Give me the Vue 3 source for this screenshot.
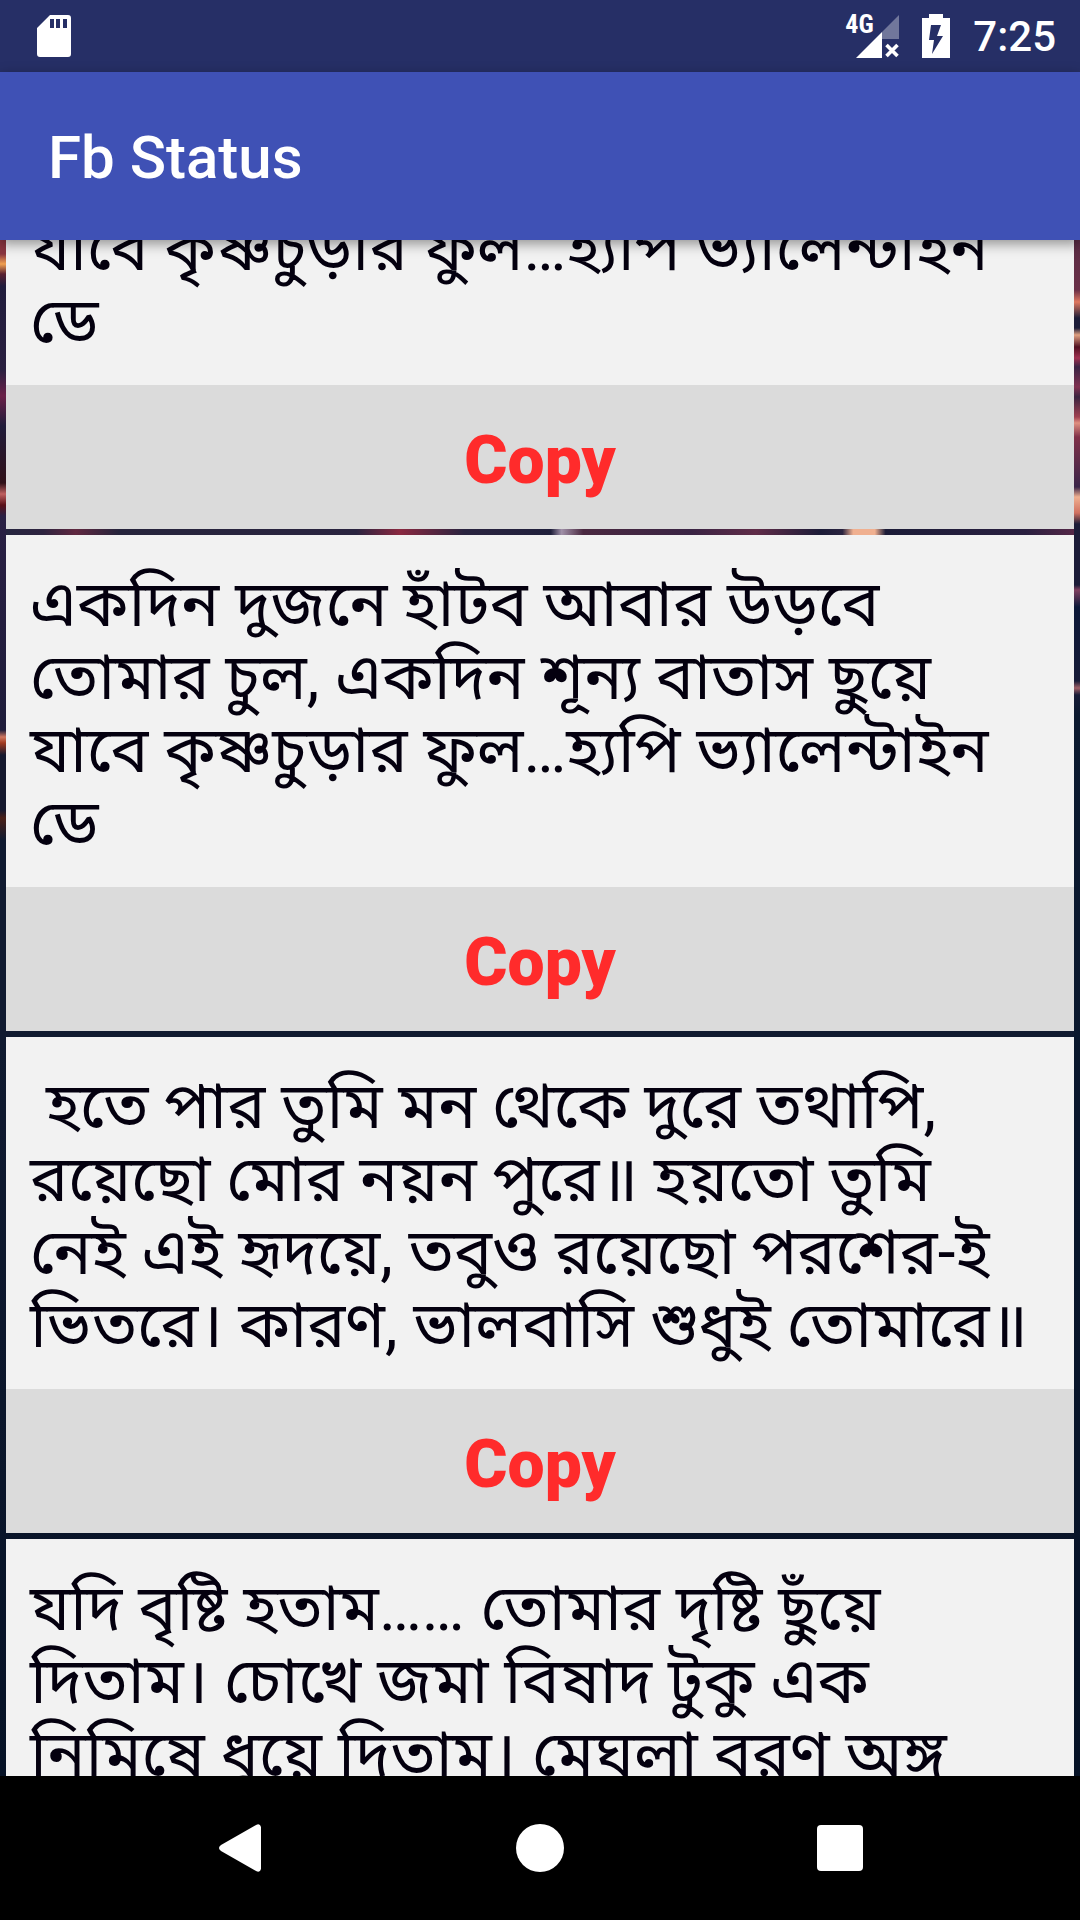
<template>
  <div class="screen">
    <header class="status-bar">
      <svg class="icon-sd" viewBox="0 0 34 42" aria-hidden="true">
        <path fill="#fff" fill-rule="evenodd" d="M13 0H31a3 3 0 0 1 3 3V39a3 3 0 0 1-3 3H3a3 3 0 0 1-3-3V13ZM13 4V13H17V4ZM19 4V13H23V4ZM26 4V13H30V4Z" />
      </svg>
      <div class="status-right">
        <div class="signal">
          <span class="network">4G</span>
          <svg class="icon-signal" viewBox="0 0 43 43" aria-hidden="true">
            <path fill="#71779b" d="M43 0V24H26V17Z" />
            <path fill="#fff" d="M26 17V43H0Z" />
            <path stroke="#fff" stroke-width="3.6" d="M30.500 30L41.500 41M41.500 30L30.500 41" />
          </svg>
        </div>
        <svg class="icon-battery" viewBox="0 0 28 44" aria-hidden="true">
          <path fill="#fff" fill-rule="evenodd" d="M7 0H21V4H28V44H0V4H7ZM9 11L7 26H12L10 40L21 22H15L19 11Z" />
        </svg>
        <time class="clock">7:25</time>
      </div>
    </header>

    <div class="app-bar">
      <h1>Fb Status</h1>
    </div>

    <main ref="list" class="list">
      <article v-for="(status, i) in statuses" :key="i" class="card">
        <p class="card-text">{{ status }}</p>
        <button class="copy" type="button" @click="copy(status)">Copy</button>
      </article>
    </main>

    <nav class="nav-bar">
      <button type="button" aria-label="Back">
        <svg viewBox="0 0 48 48" aria-hidden="true">
          <path fill="#fff" d="M45 3V45Q44 49 40 47L5 27Q1 24 5 21L40 1Q44-1 45 3Z" />
        </svg>
      </button>
      <button type="button" aria-label="Home">
        <svg viewBox="0 0 48 48" aria-hidden="true"><circle cx="24" cy="24" r="24" fill="#fff" /></svg>
      </button>
      <button type="button" aria-label="Overview">
        <svg viewBox="0 0 48 48" aria-hidden="true"><rect x="1" y="1" width="46" height="46" rx="4" fill="#fff" /></svg>
      </button>
    </nav>
  </div>
</template>

<script setup>
import { ref, onMounted } from 'vue'

const valentine = 'একদিন দুজনে হাঁটব আবার উড়বে\nতোমার চুল, একদিন শূন্য বাতাস ছুয়ে\nযাবে কৃষ্ণচুড়ার ফুল…হ্যপি ভ্যালেন্টাইন\nডে'

const statuses = [
  valentine,
  valentine,
  ' হতে পার তুমি মন থেকে দুরে তথাপি,\nরয়েছো মোর নয়ন পুরে॥ হয়তো তুমি\nনেই এই হৃদয়ে, তবুও রয়েছো পরশের-ই\nভিতরে। কারণ, ভালবাসি শুধুই তোমারে॥',
  'যদি বৃষ্টি হতাম…… তোমার দৃষ্টি ছুঁয়ে\nদিতাম। চোখে জমা বিষাদ টুকু এক\nনিমিষে ধুয়ে দিতাম। মেঘলা বরণ অঙ্গ'
]

const list = ref(null)

const copy = (text) => navigator.clipboard?.writeText(text)

onMounted(() => {
  list.value.scrollTop = 213
})
</script>

<style scoped>
.screen { display: flex; flex-direction: column; height: 100vh; overflow: hidden; background: #000; font-family: Roboto, "Noto Sans", "Noto Sans Bengali", sans-serif; }
.status-bar { display: flex; flex: none; align-items: center; justify-content: space-between; height: 72px; padding: 0 24px 0 37px; background: #262f66; color: #fff; }
.icon-sd { width: 34px; height: 42px; }
.status-right { display: flex; align-items: center; gap: 23px; }
.signal { position: relative; display: flex; justify-content: flex-end; width: 54px; }
.network { position: absolute; left: 0; top: -3px; font-family: "Roboto Condensed", Roboto, sans-serif; font-size: 26px; line-height: 24px; font-weight: 700; }
.icon-signal { width: 43px; height: 43px; }
.icon-battery { width: 28px; height: 44px; }
.clock { padding-top: 2px; font-size: 42px; line-height: 48px; font-weight: 500; }
.app-bar { position: relative; z-index: 1; display: flex; flex: none; align-items: center; box-sizing: border-box; height: 168px; padding: 4px 48px 0; background: #3f51b5; box-shadow: 0 4px 12px rgba(0, 0, 0, .4); }
h1 { margin: 0; color: #fff; font-size: 60px; line-height: 72px; font-weight: 500; }

/* blurred city lights showing through the gaps between the cards */
.list {
  display: flex; flex: 1; flex-direction: column; gap: 6px; min-height: 0; padding: 6px; overflow-y: auto; scrollbar-width: none;
  background:
    linear-gradient(#8a3540 0, #8a3540 14px, #f0a050 24px, #5a2030 34px, #201c3c 46px, #2a2040 130px, #6a2048 156px, #201c3a 186px, #301018 243px, #c06060 254px, #5a1018 265px, #2a2044 276px, #1e1c3a 490px, #d07860 497px, #a03a20 503px, #15182e 515px, #15182e 570px, #4a2018 578px, #101a30 600px, #101a30 800px, #061226 100%) left / 6px 100% no-repeat,
    linear-gradient(#5a2c44 0, #6a3048 50px, #e07860 62px, #1c1c38 78px, #1c1c38 88px, #e0a080 95px, #501020 107px, #a03050 118px, #3a2444 127px, #803050 147px, #3a2440 157px, #a04050 177px, #e09080 183px, #803048 197px, #3a2448 247px, #f0b090 257px, #d07060 273px, #1c1c38 284px, #1c1c38 345px, #804060 350px, #0c1838 367px, #181c38 441px, #a06068 448px, #181c38 455px, #0c1a30 475px, #061226 100%) right / 6px 100% no-repeat,
    linear-gradient(90deg, #262640 0, #2e2440 4%, #602840 7%, #26243c 11%, #2a2440 33%, #8a2840 37%, #2a2440 43%, #20203c 51%, #a090a8 52%, #4a2840 54%, #3a2444 64%, #602c48 70%, #1c1c38 76%, #2a2440 78%, #f0b090 79%, #f0b090 81%, #1c1c38 82%, #2a2040 95%, #5a2848 100%) 0 289px / 100% 6px no-repeat,
    linear-gradient(#15182e 0, #101a30 800px, #061226 100%);
}
.card { display: flex; flex: none; flex-direction: column; }
.card-text { margin: 0; padding: 33px 24px 27px; background: #f2f2f2; color: #04000f; font-size: 64px; line-height: 73px; white-space: pre-wrap; }
.copy { box-sizing: border-box; height: 144px; border: 0; padding: 8px 0 0; background: #dbdbdb; color: #ff2b2b; font: 900 66px/72px Roboto, sans-serif; cursor: pointer; }
.nav-bar { display: flex; flex: none; justify-content: center; height: 144px; background: #000; }
.nav-bar button { display: flex; align-items: center; justify-content: center; width: 300px; border: 0; padding: 0; background: none; cursor: pointer; }
.nav-bar svg { width: 48px; height: 48px; }
</style>

<style>
body { margin: 0; background: #000; }
</style>
